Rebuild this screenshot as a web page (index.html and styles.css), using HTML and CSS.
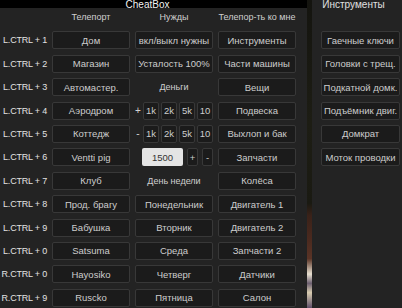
FILE: index.html
```html
<!DOCTYPE HTML>
<html>

	<head>
		<meta http-equiv="Content-Type" content="text/html; charset=utf-8">
		<link rel="stylesheet" href="styles.css">
	</head>

	<body>
		<div class="screen">
			<div class="window main">
				<div class="title">CheatBox</div>
				<div class="grid">
					<div class="key"></div>
					<div class="head">Телепорт</div>
					<div class="head">Нужды</div>
					<div class="head">Телепор-ть ко мне</div>

					<div class="key">L.CTRL + 1</div>
					<div class="btn">Дом</div>
					<div class="btn">вкл/выкл нужны</div>
					<div class="btn">Инструменты</div>

					<div class="key">L.CTRL + 2</div>
					<div class="btn">Магазин</div>
					<div class="btn">Усталость 100%</div>
					<div class="btn">Части машины</div>

					<div class="key">L.CTRL + 3</div>
					<div class="btn">Автомастер.</div>
					<div class="head">Деньги</div>
					<div class="btn">Вещи</div>

					<div class="key">L.CTRL + 4</div>
					<div class="btn">Аэродром</div>
					<div class="money">
						<span class="sign">+</span>
						<div class="btn small">1k</div>
						<div class="btn small">2k</div>
						<div class="btn small">5k</div>
						<div class="btn small">10</div>
					</div>
					<div class="btn">Подвеска</div>

					<div class="key">L.CTRL + 5</div>
					<div class="btn">Коттедж</div>
					<div class="money">
						<span class="sign">-</span>
						<div class="btn small">1k</div>
						<div class="btn small">2k</div>
						<div class="btn small">5k</div>
						<div class="btn small">10</div>
					</div>
					<div class="btn">Выхлоп и бак</div>

					<div class="key">L.CTRL + 6</div>
					<div class="btn">Ventti pig</div>
					<div class="amount">
						<div class="field">1500</div>
						<div class="btn tiny">+</div>
						<div class="btn tiny">-</div>
					</div>
					<div class="btn">Запчасти</div>

					<div class="key">L.CTRL + 7</div>
					<div class="btn">Клуб</div>
					<div class="head">День недели</div>
					<div class="btn">Колёса</div>

					<div class="key">L.CTRL + 8</div>
					<div class="btn">Прод. брагу</div>
					<div class="btn">Понедельник</div>
					<div class="btn">Двигатель 1</div>

					<div class="key">L.CTRL + 9</div>
					<div class="btn">Бабушка</div>
					<div class="btn">Вторник</div>
					<div class="btn">Двигатель 2</div>

					<div class="key">L.CTRL + 0</div>
					<div class="btn">Satsuma</div>
					<div class="btn">Среда</div>
					<div class="btn">Запчасти 2</div>

					<div class="key">R.CTRL + 0</div>
					<div class="btn">Hayosiko</div>
					<div class="btn">Четверг</div>
					<div class="btn">Датчики</div>

					<div class="key">R.CTRL + 9</div>
					<div class="btn">Ruscko</div>
					<div class="btn">Пятница</div>
					<div class="btn">Салон</div>
				</div>
			</div>
			<div class="backdrop"></div>
			<div class="window tools">
				<div class="title light">Инструменты</div>
				<div class="list">
					<div class="spacer"></div>
					<div class="btn">Гаечные ключи</div>
					<div class="btn">Головки с трещ.</div>
					<div class="btn">Подкатной домк.</div>
					<div class="btn">Подъёмник двиг.</div>
					<div class="btn">Домкрат</div>
					<div class="btn">Моток проводки</div>
				</div>
			</div>
		</div>
	</body>

</html>
```

FILE: styles.css
```css
* {
	margin: 0;
	padding: 0;
	box-sizing: border-box;
}

body {
	background: #111;
	font-family: "Liberation Sans", Arial, sans-serif;
	font-size: 10px;
	color: #d2d2d2;
	overflow: hidden;
}

.screen {
	display: flex;
	width: 402px;
	height: 308px;
	overflow: hidden;
}

.window {
	background: #232323;
	height: 308px;
}

.main {
	width: 307px;
	flex-shrink: 0;
}

.backdrop {
	width: 5px;
	flex-shrink: 0;
	background: linear-gradient(#14140f 0%, #1d1d14 40%, #1a1a12 66%, #3a2219 70%, #4b2a1f 78%, #5a3426 84%, #e8e0d0 89%, #6c5f70 92%, #d8ccb0 95%, #5e4e68 100%);
}

.tools {
	flex: 1;
	padding-left: 9px;
}

.title {
	height: 8px;
	line-height: 10px;
	font-size: 10px;
	color: #f2f2f2;
	background: #000;
	text-align: center;
	padding-right: 12px;
	white-space: nowrap;
}

.title.light {
	background: #232323;
	color: #e0e0e0;
	padding-right: 16px;
}

.grid {
	display: grid;
	grid-template-columns: 47px 78px 78px 78px;
	grid-auto-rows: 18px;
	column-gap: 5px;
	row-gap: 5.4px;
}

.list {
	display: grid;
	grid-template-columns: 79px;
	grid-auto-rows: 18px;
	row-gap: 5.4px;
}

.key {
	display: flex;
	align-items: center;
	justify-content: flex-end;
	font-size: 9px;
	color: #e2e2e2;
	white-space: nowrap;
	letter-spacing: -0.2px;
}

.head {
	display: flex;
	align-items: center;
	justify-content: center;
	font-size: 9px;
	color: #cfcfcf;
	white-space: nowrap;
}

.btn {
	display: flex;
	align-items: center;
	justify-content: center;
	background: #1b1b1b;
	border: 1px solid #383838;
	border-radius: 2px;
	font-size: 9.5px;
	color: #cdcdcd;
	white-space: nowrap;
	overflow: hidden;
}

.money {
	display: flex;
	gap: 2px;
}

.sign {
	width: 6px;
	display: flex;
	align-items: center;
	justify-content: center;
}

.money .small {
	flex: 1;
}

.amount {
	display: flex;
	gap: 4px;
	padding-left: 7px;
}

.field {
	width: 41px;
	display: flex;
	align-items: center;
	justify-content: center;
	background: #e4e4e4;
	border-radius: 2px;
	font-size: 9.5px;
	color: #333;
}

.amount .tiny {
	width: 11px;
}
```
